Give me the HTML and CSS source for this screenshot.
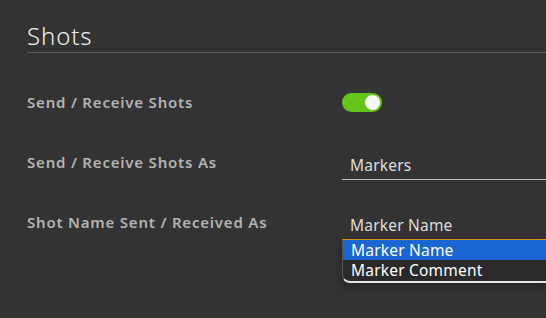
FILE: index.html
```html
<!DOCTYPE html>
<html lang="en">
<head>
    <meta charset="UTF-8">
    <title>Shots</title>
    <link rel="stylesheet" href="styles.css">
</head>
<body>
    <div class="panel">
        <h2 class="panel-title">Shots</h2>

        <div class="row">
            <div class="label">Send / Receive Shots</div>
            <div class="field">
                <span class="toggle on"><span class="knob"></span></span>
            </div>
        </div>

        <div class="row">
            <div class="label">Send / Receive Shots As</div>
            <div class="field">
                <div class="select">Markers</div>
            </div>
        </div>

        <div class="row">
            <div class="label">Shot Name Sent / Received As</div>
            <div class="field">
                <div class="select focused">Marker Name</div>
                <ul class="options">
                    <li class="selected">Marker Name</li>
                    <li>Marker Comment</li>
                </ul>
            </div>
        </div>
    </div>
</body>
</html>
```

FILE: styles.css
```css
/* general */
body {
    margin: 0;
    background-color: #333333;
    font-family: 'Noto Sans', 'Open Sans', sans-serif;
    height: 318px;
    overflow: hidden;
}

.panel {
    padding: 19px 0 0 27px;
}

.panel-title {
    margin: 0;
    font-size: 24px;
    font-weight: 300;
    color: #eeeeee;
    line-height: 33px;
    letter-spacing: 0.9px;
    border-bottom: 1px solid #5c5c5c;
}

/* rows */
.row {
    display: flex;
    align-items: center;
    height: 60px;
}

.row:first-of-type {
    margin-top: 19px;
}

.label {
    width: 315px;
    font-size: 15px;
    font-weight: 600;
    color: #b3b3b3;
    letter-spacing: 0.8px;
}

.field {
    flex: 1;
    position: relative;
}

/* toggle */
.toggle {
    display: block;
    width: 40px;
    height: 19px;
    border-radius: 10px;
    background-color: #66c41a;
    position: relative;
}

.toggle .knob {
    position: absolute;
    right: 2px;
    top: 2px;
    width: 15px;
    height: 15px;
    border-radius: 50%;
    background-color: #f8f8f8;
}

/* select */
.select {
    padding: 4px 8px 4px;
    font-size: 15.5px;
    line-height: 20px;
    color: #dddddd;
    border-bottom: 1px solid #bdbdbd;
    margin-top: 6px;
    letter-spacing: 0.2px;
}

.select.focused {
    border-bottom-color: #e89a17;
}

.options {
    position: absolute;
    top: 100%;
    left: 0;
    right: 0;
    margin: 0;
    padding: 0;
    list-style: none;
    background-color: #2a2a2a;
    border-bottom: 2px solid #e8e8e8;
    border-left: 1px solid #555555;
    border-bottom-left-radius: 8px;
    box-shadow: 0 3px 8px rgba(0, 0, 0, 0.35);
    font-size: 15.5px;
    letter-spacing: 0.2px;
    color: #ffffff;
}

.options li {
    padding: 0 8px;
    line-height: 20.5px;
}

.options li.selected {
    background-color: #1a66d2;
}
```
